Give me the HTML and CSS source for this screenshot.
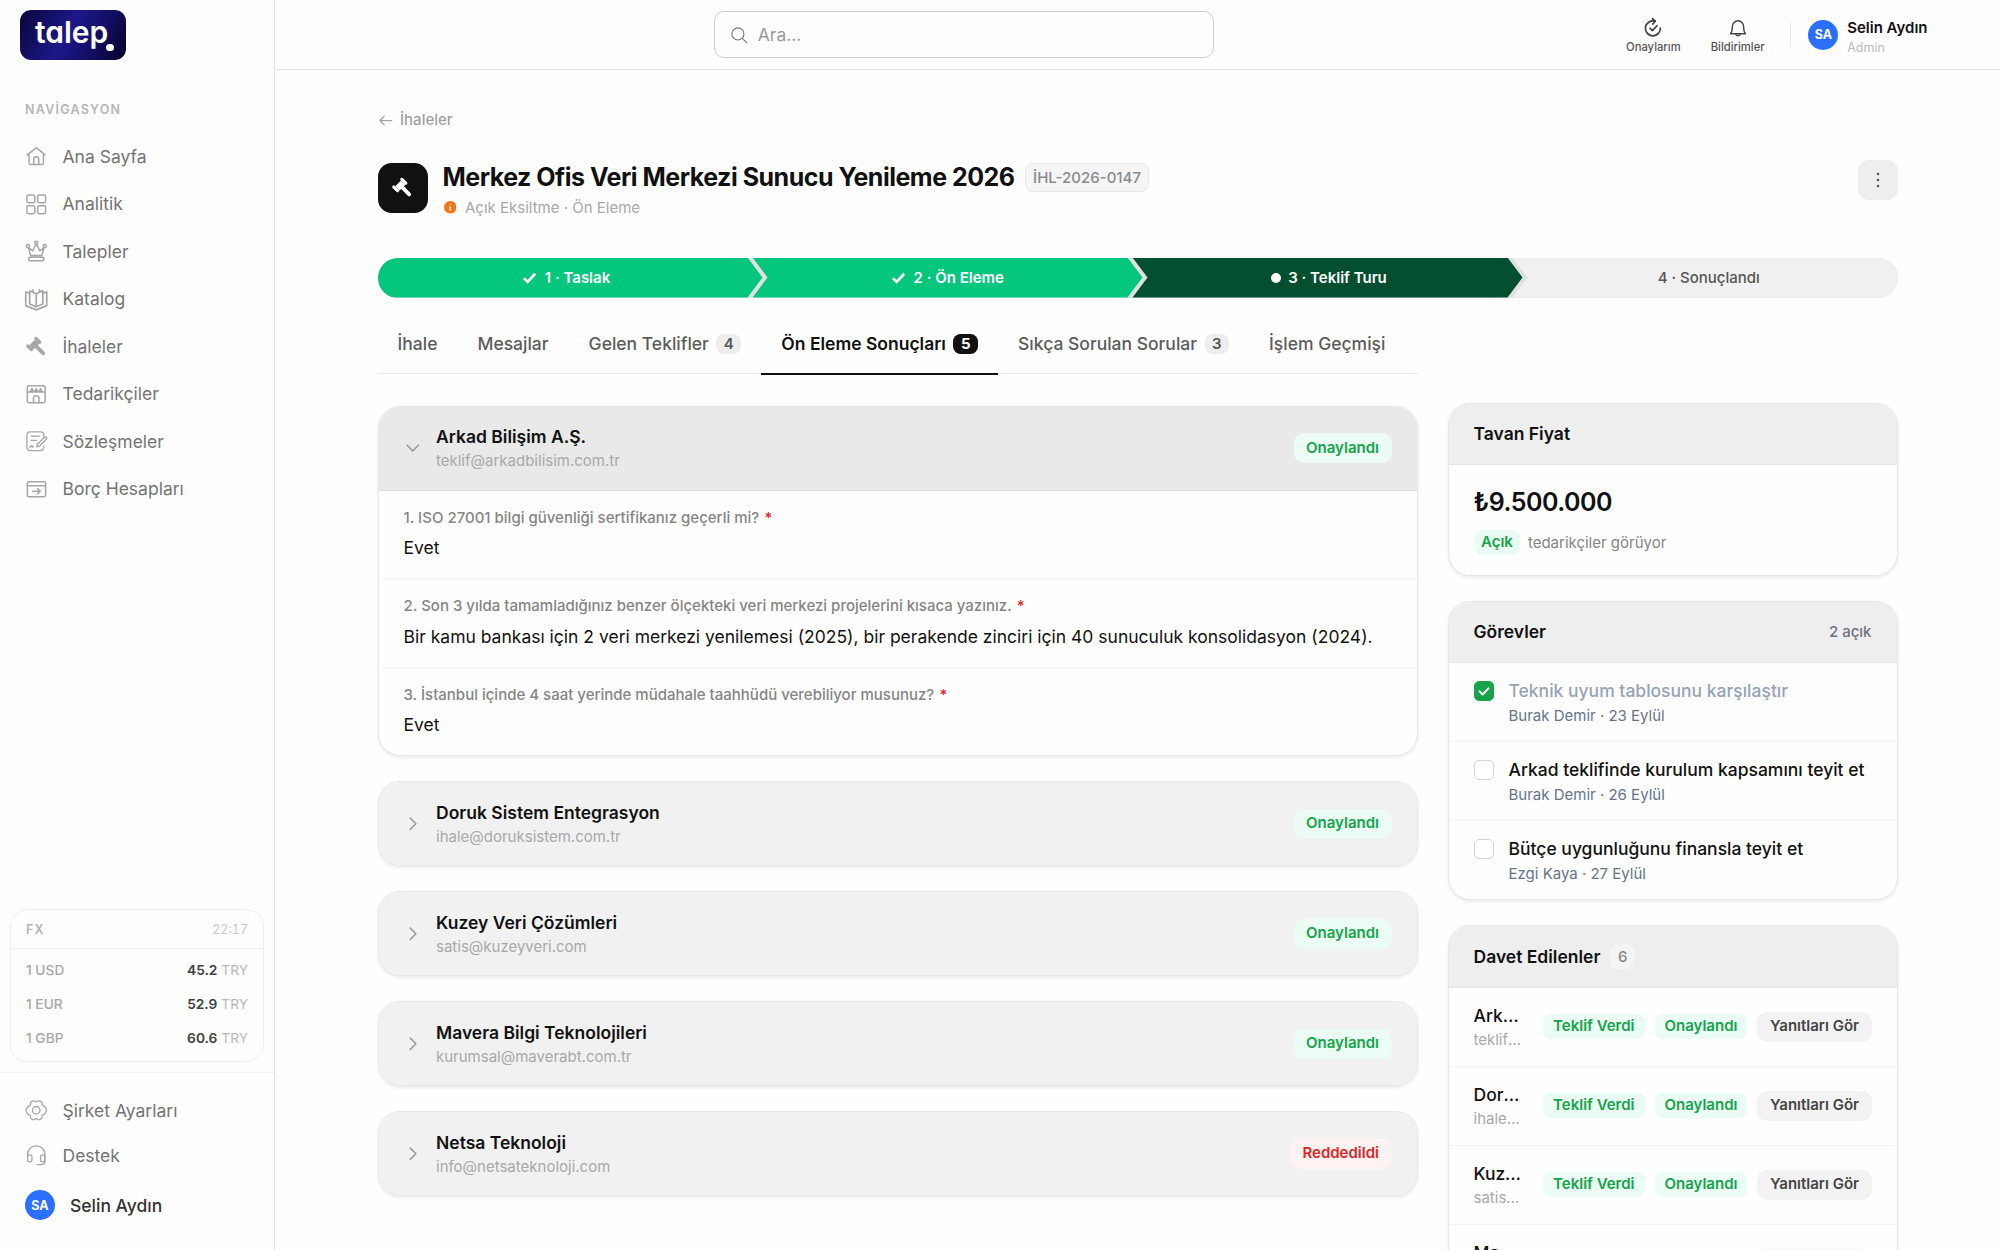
FILE: index.html
```html
<!DOCTYPE html>
<html lang="tr">
<head>
<meta charset="utf-8">
<meta name="viewport" content="width=device-width, initial-scale=1">
<title>Merkez Ofis Veri Merkezi Sunucu Yenileme 2026 · talep.</title>
<link rel="stylesheet" href="styles.css">
</head>
<body>
<svg class="sprite" aria-hidden="true">
  <symbol id="i-gavel" viewBox="0 0 24 24">
    <path d="M4.5 11 10.4 5l5 4.400-6.200 6z" fill="currentColor"/>
    <path d="m11.600 3.600 4.200 4M3 11.800l4 3.800" stroke="currentColor" stroke-width="3.400" stroke-linecap="round"/>
    <path d="m10 10 9.400 9.600" stroke="currentColor" stroke-width="4" stroke-linecap="round"/>
  </symbol>
  <symbol id="i-check" viewBox="0 0 12 12"><path d="m1.500 6.500 3 3L10.500 3" fill="none" stroke="currentColor" stroke-width="2.200"/></symbol>
  <symbol id="i-right" viewBox="0 0 14 14"><path d="m5 2.500 4.500 4.500L5 11.500" fill="none" stroke="currentColor" stroke-width="1.200" stroke-linecap="round" stroke-linejoin="round"/></symbol>
  <symbol id="i-down" viewBox="0 0 14 14"><path d="M2.500 5 7 9.500 11.500 5" fill="none" stroke="currentColor" stroke-width="1.200" stroke-linecap="round" stroke-linejoin="round"/></symbol>
</svg>

<div class="app">
  <aside class="sidebar">
    <a class="logo" href="#" aria-label="talep">talep<span class="logo-dot"></span></a>
    <p class="nav-title">NAVİGASYON</p>
    <nav class="nav">
      <a class="nav-link" href="#"><svg class="icon" viewBox="0 0 24 24"><path d="M2.500 10.500 12 2.800l9.500 7.700M4.300 9.500v9.800c0 .9.600 1.500 1.500 1.500h12.400c.9 0 1.500-.6 1.500-1.500V9.500M9.300 20.800v-5.600a2.700 2.700 0 0 1 5.400 0v5.600"/></svg>Ana Sayfa</a>
      <a class="nav-link" href="#"><svg class="icon" viewBox="0 0 24 24"><rect x="2" y="2" width="8.500" height="8.500" rx="1.800"/><rect x="13.500" y="2" width="8.500" height="8.500" rx="1.800"/><rect x="2" y="13.500" width="8.500" height="8.500" rx="1.800"/><rect x="13.500" y="13.500" width="8.500" height="8.500" rx="1.800"/></svg>Analitik</a>
      <a class="nav-link" href="#"><svg class="icon" viewBox="0 0 24 24"><circle cx="12" cy="2.900" r="1.700"/><circle cx="3" cy="6.500" r="1.700"/><circle cx="21" cy="6.500" r="1.700"/><path d="M3.800 8 6 16.500h12L20.200 8l-4.400 3.600L12.300 4.600h-.6l-3.500 7zM5 18.500h14a1 1 0 0 1 1 1v1.500a1 1 0 0 1-1 1H5a1 1 0 0 1-1-1v-1.500a1 1 0 0 1 1-1z"/></svg>Talepler</a>
      <a class="nav-link" href="#"><svg class="icon icon-wide" viewBox="0 0 24 24"><path d="M12 6.200 5 3v14l7 3 7-3V3zM12 6.200V20M5 5.500.8 4.200v14.600L12 23.300l11.200-4.500V4.200L19 5.500M8.500 4.600V2M15.500 4.600V2"/></svg>Katalog</a>
      <a class="nav-link" href="#"><svg class="icon icon-solid" viewBox="0 0 24 24"><use href="#i-gavel"/></svg>İhaleler</a>
      <a class="nav-link" href="#"><svg class="icon" viewBox="0 0 24 24"><rect x="2.500" y="3" width="19" height="18" rx="1.500"/><path d="M2.500 9.500h19M6 9l1.500-3L9 9zM10.500 9 12 6l1.500 3zM15 9l1.500-3L18 9zM9 21v-4.500a3 3 0 0 1 6 0V21"/></svg>Tedarikçiler</a>
      <a class="nav-link" href="#"><svg class="icon icon-thin" viewBox="0 0 24 24"><path d="M20 9V5.500A3.500 3.500 0 0 0 16.500 2h-11A3.500 3.500 0 0 0 2 5.500v13A3.500 3.500 0 0 0 5.500 22h11a3.500 3.500 0 0 0 3.500-3.500V17M6.500 6.500h9M6.500 11h6M5.500 19c1-2.800 2-3 2.200-1.500.1 1 .8 1 1.300.300M12.500 18l.7-2.800 7.600-7.400c.6-.6 1.400-.6 2 0s.6 1.400 0 2L15.300 17.300z"/></svg>Sözleşmeler</a>
      <a class="nav-link" href="#"><svg class="icon" viewBox="0 0 24 24"><rect x="2.500" y="4" width="19.500" height="16" rx="1.500"/><path d="M2.500 8.300h19.500M8 14h8M13.500 11.300l2.700 2.700-2.700 2.700"/></svg>Borç Hesapları</a>
    </nav>

    <section class="fx">
      <header class="fx-head"><h2 class="fx-title">FX</h2><time class="fx-time">22:17</time></header>
      <dl class="fx-list">
        <div class="fx-row"><dt>1 USD</dt><dd><b>45.2</b> TRY</dd></div>
        <div class="fx-row"><dt>1 EUR</dt><dd><b>52.9</b> TRY</dd></div>
        <div class="fx-row"><dt>1 GBP</dt><dd><b>60.6</b> TRY</dd></div>
      </dl>
    </section>

    <div class="side-foot">
      <a class="nav-link" href="#"><svg class="icon icon-thin" viewBox="0 0 24 24"><circle cx="12" cy="12" r="4"/><path d="M8.600 2h1.800c.5 1.300 2.700 1.300 3.200 0h1.800l2.300 1.300c.3.200.5.500.4.900-.4 1.700.6 3.200 2.300 3.500.4.100.7.300.9.600L22.700 11c.2.600.2 1.400 0 2l-1.400 2.700c-.2.300-.5.500-.9.600-1.700.3-2.700 1.800-2.300 3.500.1.400-.1.700-.4.900L15.400 22h-1.800c-.5-1.300-2.700-1.300-3.200 0H8.600l-2.300-1.300c-.3-.2-.5-.5-.4-.9.400-1.700-.6-3.200-2.300-3.500-.4-.1-.7-.3-.9-.6L1.300 13c-.2-.6-.2-1.400 0-2l1.400-2.700c.2-.3.500-.5.9-.6 1.700-.3 2.700-1.800 2.300-3.500-.1-.4.100-.7.400-.9z"/></svg>Şirket Ayarları</a>
      <a class="nav-link" href="#"><svg class="icon icon-thin" viewBox="0 0 24 24"><path d="M2.800 13v-2.300a9.200 8.700 0 0 1 18.400 0v8c0 2-1.200 3.300-3.200 3.300h-5"/><rect x="2.800" y="11.500" width="4.600" height="7.500" rx="2"/><rect x="16.600" y="11.500" width="4.600" height="7.500" rx="2"/></svg>Destek</a>
      <a class="side-user" href="#"><span class="avatar">SA</span>Selin Aydın</a>
    </div>
  </aside>

  <div class="page">
    <header class="topbar">
      <div class="search-area">
        <label class="search">
          <svg class="search-icon" viewBox="0 0 16 16"><circle cx="7" cy="7" r="5.500"/><path d="m11 11 4 4"/></svg>
          <input class="search-input" type="search" placeholder="Ara..." aria-label="Ara">
        </label>
      </div>
      <div class="actions">
        <button class="action" type="button"><svg class="action-icon" viewBox="0 0 16 16"><path d="M9.600 2.500a6 6 0 1 0 4.300 5.600" stroke-width="1.400"/><path d="M7.600.600 9.900 2.600 7.800 4.800M5.600 8.200l1.900 1.900 3.700-3.900" stroke-width="1.400"/></svg>Onaylarım</button>
        <button class="action" type="button"><svg class="action-icon" viewBox="0 0 16 16"><path d="M2 12.600c1.300-1.400 1.500-2.600 1.500-5.600a4.500 4.800 0 0 1 9 0c0 3 .2 4.200 1.500 5.600zM6.300 13.200a1.800 1.600 0 0 0 3.400 0"/></svg>Bildirimler</button>
      </div>
      <button class="account" type="button">
        <span class="avatar">SA</span>
        <span class="account-text"><span class="account-name">Selin Aydın</span><span class="account-role">Admin</span></span>
      </button>
    </header>

    <main class="main">
      <div class="content">
        <a class="back" href="#"><svg class="back-icon" viewBox="0 0 12 12"><path d="M11 6H1.500M5 2.500 1.500 6 5 9.500"/></svg>İhaleler</a>

        <div class="heading">
          <span class="heading-icon"><svg viewBox="0 0 24 24" fill="none"><use href="#i-gavel"/></svg></span>
          <div class="heading-text">
            <div class="heading-row"><h1 class="title">Merkez Ofis Veri Merkezi Sunucu Yenileme 2026</h1><span class="code">İHL-2026-0147</span></div>
            <p class="subtitle"><svg class="info" viewBox="0 0 10 10"><circle cx="5" cy="5" r="5" fill="#f97316"/><path d="M5 2.300v.8M5 4v3.700" stroke="#fff" stroke-width="1"/></svg>Açık Eksiltme · Ön Eleme</p>
          </div>
          <button class="kebab" type="button" aria-label="Diğer işlemler"><svg viewBox="0 0 16 16"><circle cx="8" cy="3.200" r="1"/><circle cx="8" cy="8" r="1"/><circle cx="8" cy="12.800" r="1"/></svg></button>
        </div>

        <ol class="steps">
          <li class="step step-done"><svg class="step-icon" viewBox="0 0 12 12"><use href="#i-check"/></svg>1 · Taslak</li>
          <li class="step step-done"><svg class="step-icon" viewBox="0 0 12 12"><use href="#i-check"/></svg>2 · Ön Eleme</li>
          <li class="step step-now"><span class="step-dot"></span>3 · Teklif Turu</li>
          <li class="step">4 · Sonuçlandı</li>
        </ol>

        <div class="columns">
          <div class="primary">
            <div class="tabs" role="tablist">
              <button class="tab" role="tab" type="button">İhale</button>
              <button class="tab" role="tab" type="button">Mesajlar</button>
              <button class="tab" role="tab" type="button">Gelen Teklifler<span class="count">4</span></button>
              <button class="tab tab-active" role="tab" type="button" aria-selected="true">Ön Eleme Sonuçları<span class="count">5</span></button>
              <button class="tab" role="tab" type="button">Sıkça Sorulan Sorular<span class="count">3</span></button>
              <button class="tab" role="tab" type="button">İşlem Geçmişi</button>
            </div>

            <div class="results">
              <section class="card">
                <button class="result-head result-open" type="button" aria-expanded="true">
                  <svg class="chevron" viewBox="0 0 14 14"><use href="#i-down"/></svg>
                  <span class="who"><span class="name">Arkad Bilişim A.Ş.</span><span class="mail">teklif@arkadbilisim.com.tr</span></span>
                  <span class="status">Onaylandı</span>
                </button>
                <dl class="answers">
                  <div class="qa"><dt>1. ISO 27001 bilgi güvenliği sertifikanız geçerli mi? <span class="req">*</span></dt><dd>Evet</dd></div>
                  <div class="qa"><dt>2. Son 3 yılda tamamladığınız benzer ölçekteki veri merkezi projelerini kısaca yazınız. <span class="req">*</span></dt><dd>Bir kamu bankası için 2 veri merkezi yenilemesi (2025), bir perakende zinciri için 40 sunuculuk konsolidasyon (2024).</dd></div>
                  <div class="qa"><dt>3. İstanbul içinde 4 saat yerinde müdahale taahhüdü verebiliyor musunuz? <span class="req">*</span></dt><dd>Evet</dd></div>
                </dl>
              </section>
              <section class="card">
                <button class="result-head" type="button" aria-expanded="false">
                  <svg class="chevron" viewBox="0 0 14 14"><use href="#i-right"/></svg>
                  <span class="who"><span class="name">Doruk Sistem Entegrasyon</span><span class="mail">ihale@doruksistem.com.tr</span></span>
                  <span class="status">Onaylandı</span>
                </button>
              </section>
              <section class="card">
                <button class="result-head" type="button" aria-expanded="false">
                  <svg class="chevron" viewBox="0 0 14 14"><use href="#i-right"/></svg>
                  <span class="who"><span class="name">Kuzey Veri Çözümleri</span><span class="mail">satis@kuzeyveri.com</span></span>
                  <span class="status">Onaylandı</span>
                </button>
              </section>
              <section class="card">
                <button class="result-head" type="button" aria-expanded="false">
                  <svg class="chevron" viewBox="0 0 14 14"><use href="#i-right"/></svg>
                  <span class="who"><span class="name">Mavera Bilgi Teknolojileri</span><span class="mail">kurumsal@maverabt.com.tr</span></span>
                  <span class="status">Onaylandı</span>
                </button>
              </section>
              <section class="card">
                <button class="result-head" type="button" aria-expanded="false">
                  <svg class="chevron" viewBox="0 0 14 14"><use href="#i-right"/></svg>
                  <span class="who"><span class="name">Netsa Teknoloji</span><span class="mail">info@netsateknoloji.com</span></span>
                  <span class="status status-no">Reddedildi</span>
                </button>
              </section>
            </div>
          </div>

          <aside class="secondary">
            <section class="card">
              <header class="card-head"><h2 class="card-title">Tavan Fiyat</h2></header>
              <div class="price">
                <p class="amount">₺9.500.000</p>
                <p class="price-note"><span class="tag tag-small">Açık</span>tedarikçiler görüyor</p>
              </div>
            </section>

            <section class="card">
              <header class="card-head"><h2 class="card-title">Görevler</h2><span class="card-note">2 açık</span></header>
              <ul class="rows">
                <li class="task task-done"><input class="check" type="checkbox" id="t1" checked><label class="who" for="t1"><span class="task-name">Teknik uyum tablosunu karşılaştır</span><span class="task-meta">Burak Demir · 23 Eylül</span></label></li>
                <li class="task"><input class="check" type="checkbox" id="t2"><label class="who" for="t2"><span class="task-name">Arkad teklifinde kurulum kapsamını teyit et</span><span class="task-meta">Burak Demir · 26 Eylül</span></label></li>
                <li class="task"><input class="check" type="checkbox" id="t3"><label class="who" for="t3"><span class="task-name">Bütçe uygunluğunu finansla teyit et</span><span class="task-meta">Ezgi Kaya · 27 Eylül</span></label></li>
              </ul>
            </section>

            <section class="card">
              <header class="card-head"><h2 class="card-title">Davet Edilenler</h2><span class="total">6</span></header>
              <ul class="rows">
                <li class="guest"><div class="who"><span class="guest-name">Arkad Bilişim A.Ş.</span><span class="mail">teklif@arkadbilisim.com.tr</span></div><div class="guest-tags"><span class="tag">Teklif Verdi</span><span class="tag">Onaylandı</span><button class="view" type="button">Yanıtları Gör</button></div></li>
                <li class="guest"><div class="who"><span class="guest-name">Doruk Sistem Entegrasyon</span><span class="mail">ihale@doruksistem.com.tr</span></div><div class="guest-tags"><span class="tag">Teklif Verdi</span><span class="tag">Onaylandı</span><button class="view" type="button">Yanıtları Gör</button></div></li>
                <li class="guest"><div class="who"><span class="guest-name">Kuzey Veri Çözümleri</span><span class="mail">satis@kuzeyveri.com</span></div><div class="guest-tags"><span class="tag">Teklif Verdi</span><span class="tag">Onaylandı</span><button class="view" type="button">Yanıtları Gör</button></div></li>
                <li class="guest"><div class="who"><span class="guest-name">Mavera Bilgi Teknolojileri</span><span class="mail">kurumsal@maverabt.com.tr</span></div><div class="guest-tags"><span class="tag">Teklif Verdi</span><span class="tag">Onaylandı</span><button class="view" type="button">Yanıtları Gör</button></div></li>
              </ul>
            </section>
          </aside>
        </div>
      </div>
    </main>
  </div>
</div>
</body>
</html>
```
FILE: styles.css
```css
:root {
  --bg: #fefefe;
  --ink: #111;
  --line: #e2e8f0;
  --line-soft: #f1f5f9;
  --green: #16a34a;
  --green-bg: #eafcf4;
  --muted: #a8a8a8;
  zoom: 1.25;
}

* { box-sizing: border-box; }

html, body { height: 100%; }

body {
  margin: 0;
  background: var(--bg);
  color: var(--ink);
  font: 14px/20px Inter, "Noto Sans", sans-serif;
}

h1, h2, p, dl, dd, ol, ul { margin: 0; padding: 0; }
ol, ul { list-style: none; }
a { color: inherit; text-decoration: none; }
button { margin: 0; padding: 0; border: 0; background: none; color: inherit; font: inherit; cursor: pointer; }
svg { display: block; flex: none; }

.sprite { position: absolute; width: 0; height: 0; }

.app { display: flex; height: 100%; }

/* Sidebar */
.sidebar {
  display: flex;
  flex-direction: column;
  flex: none;
  width: 220px;
  border-right: 1px solid #e2e2ea;
}

.logo {
  position: relative;
  align-self: flex-start;
  width: 85px;
  height: 40px;
  margin: 8px 16px 0;
  padding-left: 12px;
  border-radius: 9px;
  background: linear-gradient(120deg, #0a0638 0%, #1d188a 45%, #15106c 65%, #05022a 100%);
  color: #fff;
  font-size: 24px;
  font-weight: 600;
  line-height: 36px;
  font-feature-settings: "cv11";
}

.logo-dot {
  position: absolute;
  right: 10px;
  bottom: 7px;
  width: 6px;
  height: 6px;
  border-radius: 50%;
  background: #fff;
}

.nav-title {
  margin-top: 33px;
  padding: 0 20px;
  color: #b5b5b5;
  font-size: 10px;
  font-weight: 600;
  line-height: 15px;
  letter-spacing: 1px;
}

.nav { display: grid; gap: 4px; margin-top: 12px; }

.nav-link {
  display: flex;
  align-items: center;
  gap: 12px;
  height: 34px;
  padding: 0 20px;
  color: #737373;
}

.icon {
  width: 18px;
  height: 18px;
  overflow: visible;
  fill: none;
  stroke: #a6a6a6;
  stroke-width: 1.6;
  stroke-linecap: round;
  stroke-linejoin: round;
}
.icon-thin { stroke-width: 1.4; }
.icon-wide { stroke-width: 1.8; }
.icon-solid { color: #a6a6a6; stroke: none; }

.fx {
  margin: auto 8px 8px;
  border: 1px solid #eee;
  border-radius: 14px;
}

.fx-head {
  display: flex;
  justify-content: space-between;
  padding: 9px 12px 7px;
  border-bottom: 1px solid #f1f1f1;
  font-size: 10px;
  line-height: 15px;
}
.fx-title { color: #b5b5b5; font-size: 10px; font-weight: 600; letter-spacing: 1px; }
.fx-time { color: #c8c8c8; font-variant-numeric: tabular-nums; }

.fx-list { padding: 4px 12px; font-size: 11px; line-height: 27px; }
.fx-row { display: flex; justify-content: space-between; }
.fx-row dt { color: #a8a8a8; font-weight: 500; }
.fx-row dd { color: #b8b8b8; }
.fx-row b { color: #404040; font-weight: 600; }

.side-foot { padding: 12px 0 16px; border-top: 1px solid #efefef; }
.side-foot .nav-link { height: 36px; }

.side-user {
  display: flex;
  align-items: center;
  gap: 12px;
  height: 40px;
  margin-top: 2px;
  padding: 0 20px;
  color: #333;
  font-weight: 500;
}

.avatar {
  display: grid;
  place-items: center;
  flex: none;
  width: 24px;
  height: 24px;
  border-radius: 50%;
  background: #2b6fff;
  color: #fff;
  font-size: 10px;
  font-weight: 700;
  line-height: 12px;
}

/* Top bar */
.page { display: flex; flex-direction: column; flex: 1; min-width: 0; }

.topbar {
  display: flex;
  align-items: center;
  flex: none;
  height: 56px;
  padding: 0 58px 0 22px;
  border-bottom: 1px solid #e2e2e2;
}

.search-area { display: flex; flex: 1; justify-content: center; }

.search {
  display: flex;
  align-items: center;
  gap: 7px;
  width: 100%;
  max-width: 400px;
  height: 38px;
  padding: 0 11px;
  border: 1px solid #d0d0d0;
  border-radius: 8px;
}
.search-icon { width: 16px; height: 16px; padding: 1px; fill: none; stroke: #777; stroke-linecap: round; }
.search-input { flex: 1; min-width: 0; padding: 0; border: 0; outline: 0; background: none; color: inherit; font: inherit; }
.search-input::placeholder { color: #999; opacity: 1; }

.actions { display: flex; gap: 24px; padding: 3px 20px 0 0; }
.action {
  display: grid;
  justify-items: center;
  gap: 1px;
  color: #555;
  font-size: 9px;
  font-weight: 500;
  line-height: 12px;
}
.action-icon { width: 16px; height: 16px; overflow: visible; fill: none; stroke: #444; stroke-width: 1.1; stroke-linecap: round; stroke-linejoin: round; }

.account { display: flex; align-items: center; gap: 7px; text-align: left; }
.account::before { content: ""; width: 1px; height: 20px; margin-right: 7px; background: #ebebeb; }
.account-text { display: grid; padding-top: 2px; }
.account-name { font-size: 12px; font-weight: 600; line-height: 18px; }
.account-role { color: #bbb; font-size: 10px; line-height: 12px; }

/* Content */
.main { flex: 1; min-height: 0; overflow-y: auto; scrollbar-width: none; }
.content { max-width: 1280px; margin: 0 auto; padding: 31px 32px; }

.back { display: inline-flex; align-items: center; gap: 6px; color: #a0a0a0; font-size: 12px; font-weight: 500; line-height: 18px; }
.back-icon { width: 12px; height: 12px; fill: none; stroke: currentColor; stroke-linecap: round; stroke-linejoin: round; }

.heading { display: flex; align-items: flex-start; gap: 12px; margin-top: 21px; }
.heading-icon {
  display: grid;
  place-items: center;
  width: 40px;
  height: 40px;
  margin-top: 2px;
  border-radius: 11px;
  background: #111;
  color: #fff;
}
.heading-icon svg { width: 18px; height: 18px; }
.heading-text { flex: 1; min-width: 0; }
.heading-row { display: flex; align-items: center; gap: 8px; }
.title { font-size: 20px; font-weight: 700; line-height: 28px; letter-spacing: -0.02em; }
.code {
  padding: 1px 6px;
  border: 1px solid #e8e8e8;
  border-radius: 6px;
  background: #f5f5f5;
  color: #8a8a8a;
  font-size: 12px;
  font-weight: 500;
  line-height: 20px;
}
.subtitle { display: flex; align-items: center; gap: 7px; margin-top: 2px; padding-left: 1px; color: #a8a8a8; font-size: 12px; line-height: 16px; }
.info { width: 10px; height: 10px; }
.kebab { display: grid; place-items: center; width: 32px; height: 32px; border-radius: 9px; background: #eee; }
.kebab svg { width: 16px; height: 16px; fill: #555; }

.steps {
  display: grid;
  grid-template-columns: repeat(4, 1fr);
  height: 32px;
  margin-top: 32px;
  overflow: hidden;
  border-radius: 16px;
  background: #e0e0e0;
}
.step {
  display: flex;
  align-items: center;
  justify-content: center;
  gap: 6px;
  margin: 0 -4px;
  background: #f0f0f0;
  color: #555;
  font-size: 12px;
  font-weight: 500;
  clip-path: polygon(0 0, calc(100% - 12px) 0, 100% 50%, calc(100% - 12px) 100%, 0 100%, 12px 50%);
}
.step:first-child { margin-left: 0; padding-right: 6px; clip-path: polygon(0 0, calc(100% - 12px) 0, 100% 50%, calc(100% - 12px) 100%, 0 100%); }
.step:last-child { margin-right: 0; padding-left: 6px; clip-path: polygon(0 0, 100% 0, 100% 100%, 0 100%, 12px 50%); }
.step-done { background: #05c67d; color: #fff; font-weight: 600; }
.step-now { background: #034f30; color: #fff; font-weight: 600; }
.step-icon { width: 12px; height: 12px; }
.step-dot { width: 8px; height: 8px; margin-left: 2px; border-radius: 50%; background: #fff; }

.columns { display: grid; grid-template-columns: minmax(0, 1fr) 360px; gap: 24px; margin-top: 14px; }

.tabs { display: flex; border-bottom: 1px solid var(--line); }
.tab {
  display: flex;
  align-items: center;
  gap: 6px;
  margin-bottom: -1px;
  padding: 13px 16px 12px;
  border-bottom: 2px solid transparent;
  color: #5c5c5c;
  font-weight: 500;
  line-height: 21px;
}
.tab-active { border-color: var(--ink); color: var(--ink); font-weight: 600; }
.count { padding: 0 6px; border-radius: 6px; background: #eee; color: #555; font-size: 12px; font-weight: 600; line-height: 16px; }
.tab-active .count { background: var(--ink); color: #fff; font-weight: 700; }

.results { display: grid; gap: 20px; margin-top: 25px; }
.secondary { display: grid; align-content: start; gap: 20px; padding-top: 70px; }

.card {
  min-width: 0;
  overflow: hidden;
  border: 1px solid var(--line);
  border-radius: 18px;
  background: var(--bg);
  box-shadow: 0 1px 3px rgba(0, 0, 0, .08);
}

.result-head {
  display: flex;
  align-items: center;
  gap: 12px;
  width: 100%;
  padding: 14px 20px;
  background: #f1f1f1;
  text-align: left;
}
.result-open { border-bottom: 1px solid #dcdcdc; background: #e9e9e9; }
.chevron { width: 14px; height: 14px; color: #999; }

/* A name with a smaller second line below it */
.who { display: grid; flex: 1; min-width: 0; line-height: 1.5; }
.name { font-weight: 600; }
.mail { color: var(--muted); font-size: 12px; line-height: 1.45; }
.status { padding: 3px 10px; border-radius: 8px; background: var(--green-bg); color: var(--green); font-size: 12px; font-weight: 600; line-height: 18px; }
.status-no { background: #fef2f2; color: #dc2626; }

.qa { padding: 13px 20px; }
.qa + .qa { border-top: 1px solid var(--line-soft); }
.qa dt { color: #858585; font-size: 12px; font-weight: 500; line-height: 18px; }
.qa dd { margin-top: 4px; line-height: 22px; }
.req { margin-left: 1px; color: #dc2626; }

.card-head { display: flex; align-items: center; gap: 8px; padding: 14px 20px; border-bottom: 1px solid var(--line); background: #eee; }
.card-title { font-size: 14px; font-weight: 600; line-height: 1.45; }
.card-note { margin-left: auto; color: #6b7280; font-size: 12px; font-weight: 500; line-height: 18px; }
.total { padding: 0 6px; border-radius: 6px; background: #f4f4f4; color: #888; font-size: 12px; font-weight: 500; }

.price { padding: 16px 20px; }
.amount { font-size: 20px; font-weight: 600; line-height: 28px; letter-spacing: -0.02em; }
.price-note { display: flex; align-items: center; gap: 6px; margin-top: 8px; color: #858585; font-size: 12px; }

.tag { padding: 1px 8px; border-radius: 6px; background: var(--green-bg); color: var(--green); font-size: 12px; font-weight: 600; line-height: 18px; white-space: nowrap; }
.tag-small { padding: 1px 6px; }

.rows > li + li { border-top: 1px solid var(--line-soft); }

.task { display: flex; align-items: flex-start; gap: 12px; padding: 12px 20px; }
.check {
  flex: none;
  width: 16px;
  height: 16px;
  margin: 2px 0 0;
  border: 1px solid #cbd5e1;
  border-radius: 4px;
  appearance: none;
  background: #fff;
}
.check:checked {
  border-color: var(--green);
  background: var(--green) url("data:image/svg+xml,%3Csvg xmlns='http://www.w3.org/2000/svg' viewBox='0 0 14 14'%3E%3Cpath d='m3.500 7.300 2.400 2.400 4.600-4.800' fill='none' stroke='white' stroke-width='1.500' stroke-linecap='round' stroke-linejoin='round'/%3E%3C/svg%3E");
}
.task-name { font-weight: 500; }
.task-meta { color: #64748b; font-size: 12px; line-height: 1.45; }
.task-done .task-name { color: #94a3b8; }

.guest { display: flex; align-items: center; gap: 16px; padding: 12px 20px; }
.guest-name { font-weight: 500; }
.guest-name, .guest .mail { overflow: hidden; text-overflow: ellipsis; white-space: nowrap; }
.guest-tags { display: flex; align-items: center; flex: none; gap: 8px; }
.view { padding: 3px 10px; border-radius: 8px; background: #f3f3f3; color: #444; font-size: 12px; font-weight: 600; line-height: 18px; }
```
